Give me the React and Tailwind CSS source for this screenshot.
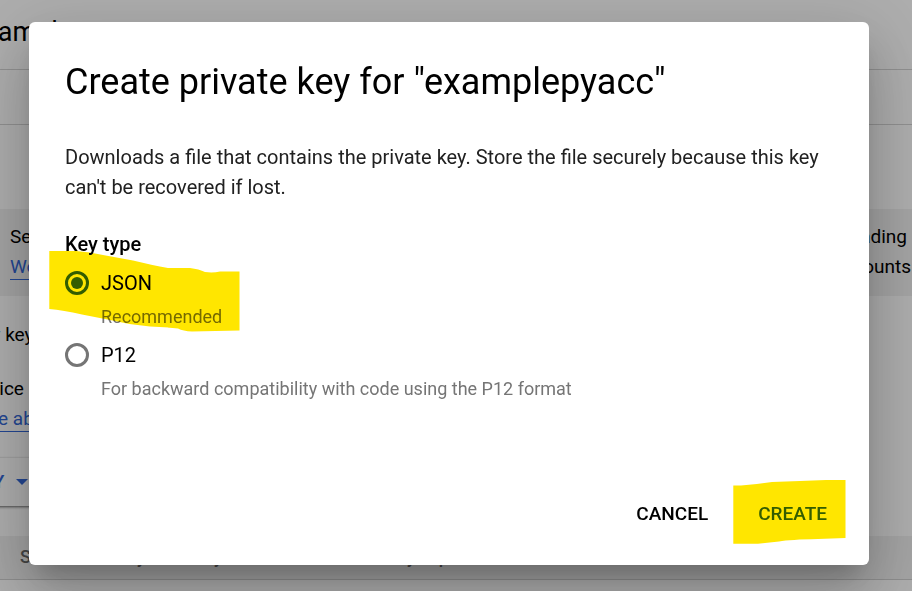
import React from "react";

const font = "font-['Roboto','Liberation_Sans',sans-serif]";

function Page() {
  return (
    <main className="-ml-[88px] min-h-screen bg-white text-[19px] leading-[30px] text-black">
      <header className="flex h-[70px] items-center border-b border-[#d4d4d4] pb-[6px] pl-[58px]">
        <h1 className="text-[27px] leading-[36px]">examplepyacc</h1>
      </header>
      <nav className="h-[55px] border-b border-[#d4d4d4]" />
      <section className="mt-[84px] bg-[#f1f1f1] pb-[14px] pl-[98px] pr-[5px] pt-[13px]">
        <div className="flex justify-between">
          <span>Service account keys could</span>
          <span>avoid downloading</span>
        </div>
        <div className="flex justify-between">
          <a href="#federation" className="text-[#3367d6] underline underline-offset-[6px]">
            Workload Identity Federation
          </a>
          <span className="-mr-1">service accounts</span>
        </div>
      </section>
      <p className="mt-6">Add a new key pair or upload a public key.</p>
      <p className="mt-6">
        Block service account key creation
        <br />
        <a href="#policies" className="text-[#3367d6] underline underline-offset-[6px]">
          Learn more about setting policies
        </a>
      </p>
      <button
        type="button"
        className="mt-6 flex h-12 items-center gap-3 rounded px-4 font-medium text-[#3367d6] shadow-[0_1px_3px_rgba(0,0,0,0.6)]"
      >
        ADD KEY
        <svg width="12" height="6" viewBox="0 0 12 6" fill="currentColor" aria-hidden="true">
          <path d="M0 0h12L6 6z" />
        </svg>
      </button>
      <table className="mt-[30px] w-full table-fixed bg-[#f1f1f1] text-left text-[18px] text-[#666]">
        <thead>
          <tr className="h-[43px] border-b border-[#d0d0d0]">
            <th className="w-[204px] pl-[108px] font-medium">Status</th>
            <th className="w-[77px] font-medium">Key</th>
            <th className="w-[193px] font-medium">Key creation date</th>
            <th className="font-medium">Key expiration date</th>
          </tr>
        </thead>
      </table>
    </main>
  );
}

function KeyOption({ id, label, hint, defaultChecked, children }) {
  return (
    <div className="relative flex gap-3">
      <input
        id={id}
        type="radio"
        name="keyType"
        defaultChecked={defaultChecked}
        aria-describedby={id + "-hint"}
        className="mt-[3px] grid size-6 shrink-0 appearance-none place-items-center rounded-full border-3 border-[#757575] checked:border-[#3367d6] checked:before:size-3 checked:before:rounded-full checked:before:bg-[#3367d6] checked:before:content-['']"
      />
      <div className="flex flex-col gap-1">
        <label htmlFor={id}>{label}</label>
        <p id={id + "-hint"} className="text-[18px] text-[#757575]">
          {hint}
        </p>
      </div>
      {children}
    </div>
  );
}

function Dialog() {
  return (
    <div className="fixed inset-0 flex items-start bg-black/32 pb-[26px] pl-[29px] pr-[43px] pt-[22px]">
      <form
        role="dialog"
        aria-labelledby="dialog-title"
        onSubmit={(e) => e.preventDefault()}
        className="flex w-full flex-col rounded-[6px] bg-white px-9 pb-6 pt-9 text-[20px] leading-[30px] text-black shadow-[0_16px_22px_-10px_rgba(0,0,0,0.2),0_36px_57px_4px_rgba(0,0,0,0.14),0_14px_69px_12px_rgba(0,0,0,0.12)]"
      >
        <h2 id="dialog-title" className="text-[36px] leading-[48px]">
          Create private key for "examplepyacc"
        </h2>
        <p className="mt-9 text-[#212121]">
          Downloads a file that contains the private key. Store the file securely because this key can't be
          recovered if lost.
        </p>
        <h3 id="key-type" className="mt-[27px] font-medium">
          Key type
        </h3>
        <div role="radiogroup" aria-labelledby="key-type" className="mt-[9px] flex flex-col gap-2">
          <KeyOption id="json" label="JSON" hint="Recommended" defaultChecked>
            <svg
              className="pointer-events-none absolute -left-4 -top-[18px] mix-blend-multiply"
              width="192"
              height="83"
              viewBox="49 250 192 83"
              fill="#ffe600"
              aria-hidden="true"
            >
              <path d="M49.3 251H76Q90 252 103 255L133 260.500Q152 265 168 268H190Q199 269 205 272Q213 273 220 271.500H239.500V330.500L192 331.500Q183 331 178 328.500Q165 327 150 326.500Q130 325 110 320L82 314.500Q63 310 49.300 309Z" />
            </svg>
          </KeyOption>
          <KeyOption id="p12" label="P12" hint="For backward compatibility with code using the P12 format" />
        </div>
        <div className="-mr-[6px] mt-[83px] flex justify-end gap-[26px] text-[19px]">
          <button type="button" className="h-[54px] px-3 font-medium">
            CANCEL
          </button>
          <button type="submit" className="relative h-[54px] px-3 font-medium text-[#3367d6]">
            CREATE
            <svg
              className="pointer-events-none absolute -left-[13px] -top-2 mix-blend-multiply"
              width="114"
              height="66"
              viewBox="733 479 114 66"
              fill="#ffe600"
              aria-hidden="true"
            >
              <path d="M733.300 485.500H741Q757 484 772 482L800 481L826 480H845.500V538L818 539Q790 539.500 779 541.500L758 543.700H733.300Z" />
            </svg>
          </button>
        </div>
      </form>
    </div>
  );
}

export default function App() {
  return (
    <div className={font + " h-screen overflow-hidden"}>
      <Page />
      <Dialog />
    </div>
  );
}
